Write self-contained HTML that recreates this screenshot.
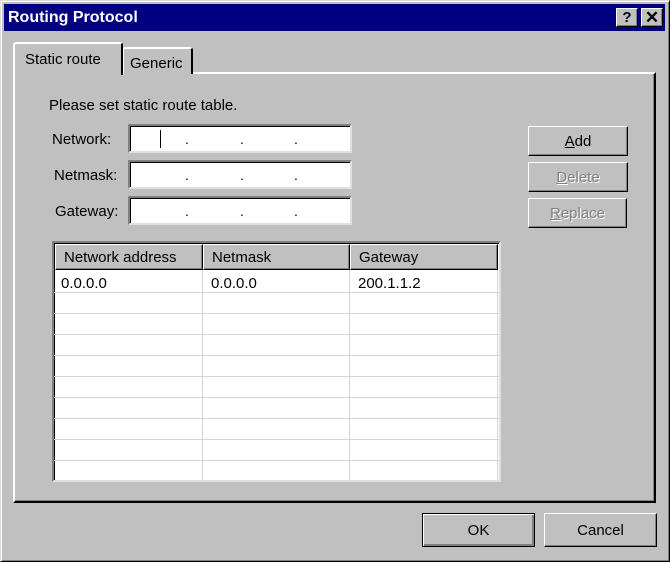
<!DOCTYPE html>
<html><head><style>
*{box-sizing:border-box;margin:0;padding:0}
body{width:670px;height:562px;background:#c0c0c0;font-family:"Liberation Sans",sans-serif;font-size:15px;color:#000;position:relative;overflow:hidden}
.a{position:absolute}
.win{left:0;top:0;width:670px;height:562px;border:1px solid #dfdfdf;border-right-color:#000;border-bottom-color:#000;box-shadow:inset 1px 1px #fff,inset -1px -1px #808080}
.title{left:4px;top:4px;width:661px;height:27px;background:#000080;color:#fff;font-weight:bold;font-size:16px;line-height:27px;padding-left:4px}
.tb{top:8px;width:22px;height:19px;background:#c0c0c0;border:1px solid #fff;border-right-color:#000;border-bottom-color:#000;box-shadow:inset -1px -1px #808080;color:#000;font-weight:bold;text-align:center;line-height:17px;font-size:15px}
.panel{left:13px;top:72px;width:643px;height:431px;border:2px solid #fff;border-right-color:#000;border-bottom-color:#000;box-shadow:inset -1px -1px #808080}
.tab{border:2px solid #fff;border-bottom:none;border-right-color:#000;border-radius:3px 3px 0 0;background:#c0c0c0;padding-left:10px}
.field{left:128px;width:224px;height:29px;background:#fff;border:2px solid #808080;border-right-color:#dfdfdf;border-bottom-color:#dfdfdf;box-shadow:inset 1px 1px #000}
.dot{top:5px;font-size:14px}
.btn{background:#c0c0c0;border:1px solid #fff;border-right-color:#000;border-bottom-color:#000;box-shadow:inset -1px -1px #808080;text-align:center;font-size:15px}
.dis{color:#808080;text-shadow:1px 1px #fff}
.tbl{left:52px;top:241px;width:449px;height:241px;background:#fff;border:2px solid #808080;border-right-color:#dfdfdf;border-bottom-color:#dfdfdf;box-shadow:inset 1px 1px #000;overflow:hidden}
.hd{top:1px;height:26px;background:#c0c0c0;border:1px solid #fff;border-right-color:#000;border-bottom-color:#000;box-shadow:inset -1px -1px #808080;padding-left:8px;line-height:26px}
.hl{left:0;width:445px;height:1px;background:#d4d4d4}
.vl{top:27px;width:1px;height:215px;background:#d4d4d4}
</style></head><body>
<div class="a win"></div>
<div class="a title">Routing Protocol</div>
<div class="a tb" style="left:616px">?</div>
<div class="a tb" style="left:641px;font-size:17px">✕</div>

<div class="a panel"></div>
<div class="a tab" style="left:122px;top:47px;width:71px;height:27px;line-height:29px;padding-left:6px">Generic</div>
<div class="a tab" style="left:13px;top:42px;width:110px;height:33px;line-height:32px;border-right:2px solid #000">Static route</div>

<div class="a" style="left:49px;top:97px">Please set static route table.</div>
<div class="a" style="left:52px;top:131px">Network:</div>
<div class="a" style="left:54px;top:167px">Netmask:</div>
<div class="a" style="left:55px;top:203px">Gateway:</div>
<div class="a field" style="top:124px"><div class="a" style="left:30px;top:4px;width:1px;height:18px;background:#000"></div><span class="a dot" style="left:55px">.</span><span class="a dot" style="left:110px">.</span><span class="a dot" style="left:164px">.</span></div>
<div class="a field" style="top:160px"><span class="a dot" style="left:55px">.</span><span class="a dot" style="left:110px">.</span><span class="a dot" style="left:164px">.</span></div>
<div class="a field" style="top:196px"><span class="a dot" style="left:55px">.</span><span class="a dot" style="left:110px">.</span><span class="a dot" style="left:164px">.</span></div>

<div class="a btn" style="left:528px;top:126px;width:100px;height:30px;line-height:30px"><u>A</u>dd</div>
<div class="a btn dis" style="left:528px;top:162px;width:100px;height:30px;line-height:30px"><u>D</u>elete</div>
<div class="a btn dis" style="left:528px;top:198px;width:99px;height:30px;line-height:30px"><u>R</u>eplace</div>

<div class="a tbl">
<div class="a hd" style="left:1px;width:148px">Network address</div>
<div class="a hd" style="left:149px;width:147px">Netmask</div>
<div class="a hd" style="left:296px;width:148px">Gateway</div>
<div class="a" style="left:7px;top:32px">0.0.0.0</div>
<div class="a" style="left:157px;top:32px">0.0.0.0</div>
<div class="a" style="left:304px;top:32px">200.1.1.2</div>
<div class="a hl" style="top:49px"></div><div class="a hl" style="top:70px"></div><div class="a hl" style="top:91px"></div><div class="a hl" style="top:112px"></div><div class="a hl" style="top:133px"></div><div class="a hl" style="top:154px"></div><div class="a hl" style="top:175px"></div><div class="a hl" style="top:196px"></div><div class="a hl" style="top:217px"></div>
<div class="a vl" style="left:148px"></div><div class="a vl" style="left:295px"></div><div class="a vl" style="left:443px"></div>
</div>

<div class="a btn" style="left:422px;top:513px;width:113px;height:34px;line-height:33px;border:1px solid #000;box-shadow:inset 1px 1px #fff,inset -2px -2px #808080">OK</div>
<div class="a btn" style="left:544px;top:513px;width:113px;height:34px;line-height:33px">Cancel</div>
</body></html>
